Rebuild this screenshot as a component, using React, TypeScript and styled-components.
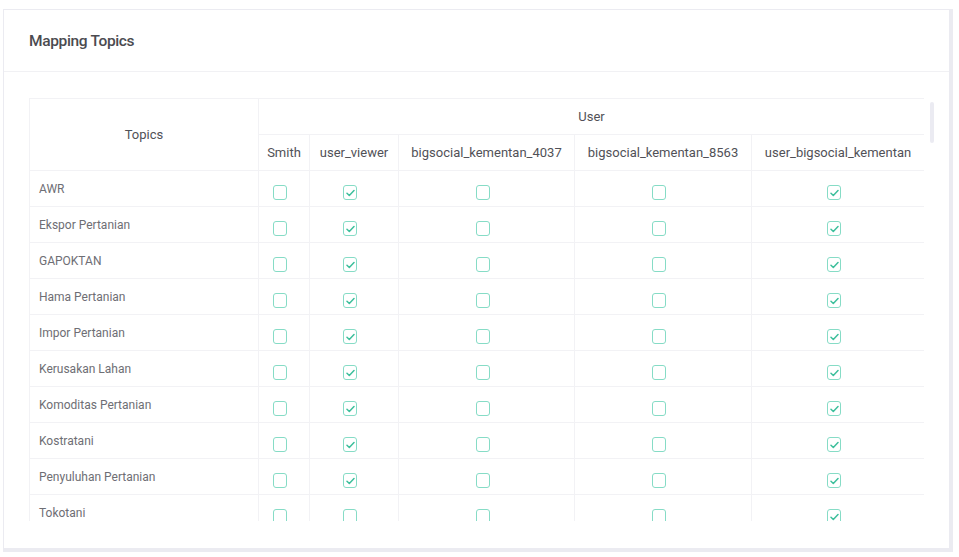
import React from "react";
import styled, { createGlobalStyle } from "styled-components";

const GlobalStyle = createGlobalStyle`
  html, body { margin: 0; padding: 0; background: #ffffff; }
  body { font-family: Roboto, "Noto Sans", sans-serif; color: #555; }
  * { box-sizing: border-box; }
`;

const Page = styled.div`
  width: 959px;
  height: 557px;
  padding: 9px 0 0 3px;
  overflow: hidden;
`;

const Card = styled.section`
  width: 950px;
  height: 543px;
  background: #fff;
  border: 1px solid #ebebf1;
  border-right-width: 4px;
  border-bottom-width: 4px;
  display: flex;
  flex-direction: column;
`;

const CardHeader = styled.header`
  height: 62px;
  flex: none;
  display: flex;
  align-items: center;
  padding: 0 0 0 25px;
  border-bottom: 1px solid #f1f1f4;
`;

const Title = styled.h2`
  margin: 0;
  font-size: 15.5px;
  font-weight: 500;
  letter-spacing: -0.35px;
  color: #4b4b50;
`;

const CardBody = styled.div`
  padding: 26px 0 0 25px;
`;

const ScrollArea = styled.div`
  display: flex;
  width: 908px;
  height: 423px;
`;

const Viewport = styled.div`
  width: 895px;
  height: 100%;
  overflow: hidden;
`;

const Track = styled.div`
  width: 13px;
  padding: 4px 3px 0 6px;
`;

const Thumb = styled.div`
  width: 4px;
  height: 41px;
  border-radius: 2px;
  background: #ebebf2;
`;

const Table = styled.table`
  width: 895px;
  table-layout: fixed;
  border-collapse: collapse;
  font-size: 13px;
`;

const Col = styled.col<{ $w: number }>`
  width: ${(p) => p.$w}px;
`;

const HeadCell = styled.th`
  height: 36px;
  padding: 0 4px;
  font-weight: 400;
  color: #515157;
  text-align: center;
  border: 1px solid #f2f2f5;
  white-space: nowrap;
  overflow: hidden;
`;

const Row = styled.tr`
  height: 36px;
`;

const TopicCell = styled.td`
  padding: 0 0 0 9px;
  font-size: 12px;
  color: #6e6e74;
  border: 1px solid #f2f2f5;
  white-space: nowrap;
  vertical-align: middle;
`;

const CheckCell = styled.td`
  padding: 14px 0 6px;
  text-align: center;
  border: 1px solid #f2f2f5;
  vertical-align: top;
  line-height: 0;
`;

const Box = styled.span`
  display: inline-block;
  width: 14px;
  height: 15px;
  margin-right: 8px;
  border: 1.5px solid #86dcc6;
  border-radius: 3px;
  background: #fff;
`;

const Check = () => (
  <svg width="9" height="8" viewBox="0 0 9 8" style={{ display: "block", margin: "3px auto 0" }}>
    <polyline points="1,4.3 3.3,6.5 8,1.5" fill="none" stroke="#3dbf9c" strokeWidth="1.5" strokeLinecap="round" strokeLinejoin="round" />
  </svg>
);

const users = [
  { name: "Smith", w: 51 },
  { name: "user_viewer", w: 89 },
  { name: "bigsocial_kementan_4037", w: 176 },
  { name: "bigsocial_kementan_8563", w: 177 },
  { name: "user_bigsocial_kementan", w: 173 },
];

const topics: [string, boolean[]][] = [
  ["AWR", [false, true, false, false, true]],
  ["Ekspor Pertanian", [false, true, false, false, true]],
  ["GAPOKTAN", [false, true, false, false, true]],
  ["Hama Pertanian", [false, true, false, false, true]],
  ["Impor Pertanian", [false, true, false, false, true]],
  ["Kerusakan Lahan", [false, true, false, false, true]],
  ["Komoditas Pertanian", [false, true, false, false, true]],
  ["Kostratani", [false, true, false, false, true]],
  ["Penyuluhan Pertanian", [false, true, false, false, true]],
  ["Tokotani", [false, false, false, false, true]],
];

export default function App() {
  return (
    <Page>
      <GlobalStyle />
      <Card>
        <CardHeader>
          <Title>Mapping Topics</Title>
        </CardHeader>
        <CardBody>
          <ScrollArea>
            <Viewport>
              <Table>
                <colgroup>
                  <Col $w={229} />
                  {users.map((u) => (
                    <Col key={u.name} $w={u.w} />
                  ))}
                </colgroup>
                <thead>
                  <tr>
                    <HeadCell rowSpan={2}>Topics</HeadCell>
                    <HeadCell colSpan={5}>User</HeadCell>
                  </tr>
                  <tr>
                    {users.map((u) => (
                      <HeadCell key={u.name}>{u.name}</HeadCell>
                    ))}
                  </tr>
                </thead>
                <tbody>
                  {topics.map(([name, flags]) => (
                    <Row key={name}>
                      <TopicCell>{name}</TopicCell>
                      {flags.map((on, i) => (
                        <CheckCell key={i}>
                          <Box>{on && <Check />}</Box>
                        </CheckCell>
                      ))}
                    </Row>
                  ))}
                </tbody>
              </Table>
            </Viewport>
            <Track>
              <Thumb />
            </Track>
          </ScrollArea>
        </CardBody>
      </Card>
    </Page>
  );
}
